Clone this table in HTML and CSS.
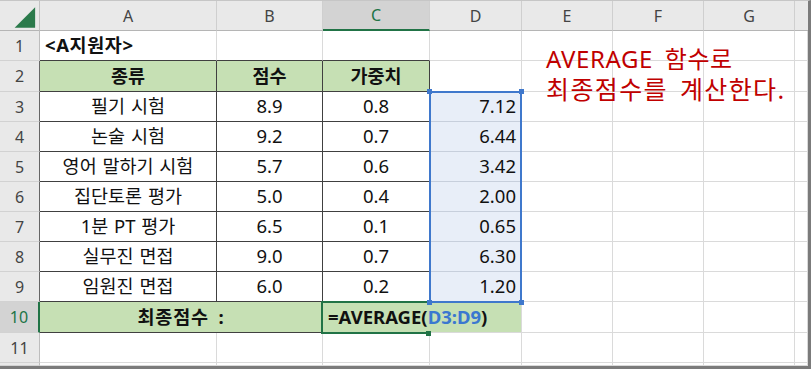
FILE: index.html
```html
<!DOCTYPE html>
<html lang="ko">
<head>
  <meta charset="UTF-8">
  <title>A지원자 최종점수</title>
  <link rel="stylesheet" href="styles.css">
</head>
<body>
  <div class="sheet">
    <!-- column headers -->
    <div class="corner">
      <svg width="40" height="30" viewBox="0 0 40 30"><polygon points="15,27 36,27 36,6" fill="#2b7a4b"/></svg>
    </div>
    <div class="colhead">A</div>
    <div class="colhead">B</div>
    <div class="colhead sel">C</div>
    <div class="colhead">D</div>
    <div class="colhead">E</div>
    <div class="colhead">F</div>
    <div class="colhead">G</div>
    <div class="colhead last"></div>

    <!-- row 1 -->
    <div class="rh">1</div>
    <div class="cell above bold">&lt;A지원자&gt;</div>
    <div class="cell above"></div>
    <div class="cell above"></div>
    <div class="cell"></div>
    <div class="cell note-anchor">
      <div class="note">
        <div class="note-line first">AVERAGE 함수로</div>
        <div class="note-line second">최종점수를 계산한다.</div>
      </div>
    </div>
    <div class="cell"></div>
    <div class="cell"></div>
    <div class="cell last"></div>

    <!-- row 2 -->
    <div class="rh in">2</div>
    <div class="cell tb hd">종류</div>
    <div class="cell tb hd">점수</div>
    <div class="cell tb hd">가중치</div>
    <div class="cell"></div>
    <div class="cell"></div>
    <div class="cell"></div>
    <div class="cell"></div>
    <div class="cell last"></div>

    <!-- row 3 -->
    <div class="rh in">3</div>
    <div class="cell tb c">필기 시험</div>
    <div class="cell tb c">8.9</div>
    <div class="cell tb c">0.8</div>
    <div class="cell d r">
      7.12
      <div class="range">
        <span class="handle tl"></span>
        <span class="handle tr"></span>
        <span class="handle bl"></span>
        <span class="handle br"></span>
      </div>
    </div>
    <div class="cell"></div>
    <div class="cell"></div>
    <div class="cell"></div>
    <div class="cell last"></div>

    <!-- row 4 -->
    <div class="rh in">4</div>
    <div class="cell tb c">논술 시험</div>
    <div class="cell tb c">9.2</div>
    <div class="cell tb c">0.7</div>
    <div class="cell d r">6.44</div>
    <div class="cell"></div>
    <div class="cell"></div>
    <div class="cell"></div>
    <div class="cell last"></div>

    <!-- row 5 -->
    <div class="rh in">5</div>
    <div class="cell tb c">영어 말하기 시험</div>
    <div class="cell tb c">5.7</div>
    <div class="cell tb c">0.6</div>
    <div class="cell d r">3.42</div>
    <div class="cell"></div>
    <div class="cell"></div>
    <div class="cell"></div>
    <div class="cell last"></div>

    <!-- row 6 -->
    <div class="rh in">6</div>
    <div class="cell tb c">집단토론 평가</div>
    <div class="cell tb c">5.0</div>
    <div class="cell tb c">0.4</div>
    <div class="cell d r">2.00</div>
    <div class="cell"></div>
    <div class="cell"></div>
    <div class="cell"></div>
    <div class="cell last"></div>

    <!-- row 7 -->
    <div class="rh in">7</div>
    <div class="cell tb c">1분 PT 평가</div>
    <div class="cell tb c">6.5</div>
    <div class="cell tb c">0.1</div>
    <div class="cell d r">0.65</div>
    <div class="cell"></div>
    <div class="cell"></div>
    <div class="cell"></div>
    <div class="cell last"></div>

    <!-- row 8 -->
    <div class="rh in">8</div>
    <div class="cell tb c">실무진 면접</div>
    <div class="cell tb c">9.0</div>
    <div class="cell tb c">0.7</div>
    <div class="cell d r">6.30</div>
    <div class="cell"></div>
    <div class="cell"></div>
    <div class="cell"></div>
    <div class="cell last"></div>

    <!-- row 9 -->
    <div class="rh in">9</div>
    <div class="cell tb c">임원진 면접</div>
    <div class="cell tb c">6.0</div>
    <div class="cell tb c">0.2</div>
    <div class="cell d r">1.20</div>
    <div class="cell"></div>
    <div class="cell"></div>
    <div class="cell"></div>
    <div class="cell last"></div>

    <!-- row 10 -->
    <div class="rh sel">10</div>
    <div class="cell total">최종점수 :</div>
    <div class="cell formula">=AVERAGE(<span class="ref">D3:D9</span>)</div>
    <div class="cell"></div>
    <div class="cell"></div>
    <div class="cell"></div>
    <div class="cell last"></div>

    <!-- row 11 -->
    <div class="rh">11</div>
    <div class="cell"></div>
    <div class="cell"></div>
    <div class="cell"></div>
    <div class="cell"></div>
    <div class="cell"></div>
    <div class="cell"></div>
    <div class="cell"></div>
    <div class="cell last"></div>

    <!-- row 12, cut off -->
    <div class="rh"></div>
    <div class="cell"></div>
    <div class="cell"></div>
    <div class="cell"></div>
    <div class="cell"></div>
    <div class="cell"></div>
    <div class="cell"></div>
    <div class="cell"></div>
    <div class="cell last"></div>
  </div>
</body>
</html>
```

FILE: styles.css
```css
body {
  margin: 0;
  background-color: #fff;
  font-family: "Noto Sans", "Noto Sans CJK KR", sans-serif;
}

.sheet {
  width: 811px;
  height: 369px;
  box-sizing: border-box;
  border-top: 1px solid #c6c6c6;
  border-right: 3px solid #7b7b7b;
  border-bottom: 3px solid #7b7b7b;
  display: grid;
  grid-template-columns: 40px 177px 106px 107px 92px 91px 91px 91px 1fr;
  grid-template-rows: 30px 30px 31px 30px 30px 30px 30px 30px 30px 30px 31px 30px 1fr;
  overflow: hidden;
  color: #111;
  font-size: 18.5px;
}

/* headers */
.corner,
.colhead,
.rh {
  background-color: #e9e9e9;
  color: #444;
  font-size: 16px;
  display: flex;
  align-items: center;
  justify-content: center;
  box-sizing: border-box;
}

.corner {
  border-right: 1px solid #c3c3c3;
  border-bottom: 1px solid #b5b5b5;
}

.colhead {
  border-right: 1px solid #cfcfcf;
  border-bottom: 1px solid #b5b5b5;
}

.rh {
  border-right: 1px solid #bdbdbd;
  border-bottom: 1px solid #d2d2d2;
}

.rh.in {
  border-right-color: #666;
}

.colhead.sel {
  background-color: #d3d3d3;
  color: #217346;
  border-bottom: 2px solid #217346;
}

.rh.sel {
  background-color: #d3d3d3;
  color: #217346;
  border-right: 2px solid #217346;
}

.last {
  border-right: none;
}

/* cells */
.cell {
  box-sizing: border-box;
  border-right: 1px solid #dadada;
  border-bottom: 1px solid #dadada;
  display: flex;
  align-items: center;
  padding: 0 5px;
  white-space: nowrap;
  line-height: 1;
  word-spacing: 1px;
}

.bold {
  font-weight: bold;
  letter-spacing: 0.6px;
}

.c {
  justify-content: center;
}

.r {
  justify-content: flex-end;
}

.above {
  border-bottom-color: #404040;
}

.tb {
  border-right-color: #404040;
  border-bottom-color: #404040;
}

.hd {
  background-color: #c6e0b4;
  font-weight: bold;
  justify-content: center;
}

.d {
  background-color: #e8eef8;
  border-bottom-color: #c7cfdc;
  position: relative;
}

.total {
  grid-column: span 2;
  background-color: #c6e0b4;
  font-weight: bold;
  letter-spacing: 0.8px;
  word-spacing: 4px;
  justify-content: center;
  border-right-color: #404040;
  border-bottom-color: #404040;
}

.formula {
  grid-column: span 2;
  background-color: #c6e0b4;
  font-weight: bold;
  position: relative;
}

.formula::before {
  content: "";
  position: absolute;
  left: -2px;
  top: -1px;
  width: 107px;
  height: 33px;
  box-sizing: border-box;
  border: 2px solid #217346;
  border-right: none;
}

.formula::after {
  content: "";
  position: absolute;
  left: 103px;
  top: 29px;
  width: 5px;
  height: 5px;
  background-color: #217346;
}

.ref {
  color: #3b78d0;
}

/* D3:D9 reference range */
.range {
  position: absolute;
  z-index: 2;
  left: -1px;
  top: -1px;
  width: 93px;
  height: 212px;
  box-sizing: border-box;
  border: 2px solid #3f78cc;
}

.handle {
  position: absolute;
  width: 5px;
  height: 5px;
  background-color: #3f78cc;
}

.handle.tl { left: -4px; top: -4px; }
.handle.tr { right: -4px; top: -4px; }
.handle.bl { left: -4px; bottom: -4px; }
.handle.br { right: -4px; bottom: -4px; }

/* text box next to the table */
.note-anchor {
  position: relative;
  overflow: visible;
}

.note {
  position: absolute;
  z-index: 2;
  left: 24px;
  top: 13px;
  color: #c00000;
  white-space: nowrap;
}

.note-line {
  height: 30px;
  line-height: 30px;
}

.note-line.first {
  font-size: 24px;
  letter-spacing: 0.6px;
  word-spacing: 5px;
}

.note-line.second {
  font-size: 25px;
  letter-spacing: 1.4px;
  word-spacing: 4px;
}
```
